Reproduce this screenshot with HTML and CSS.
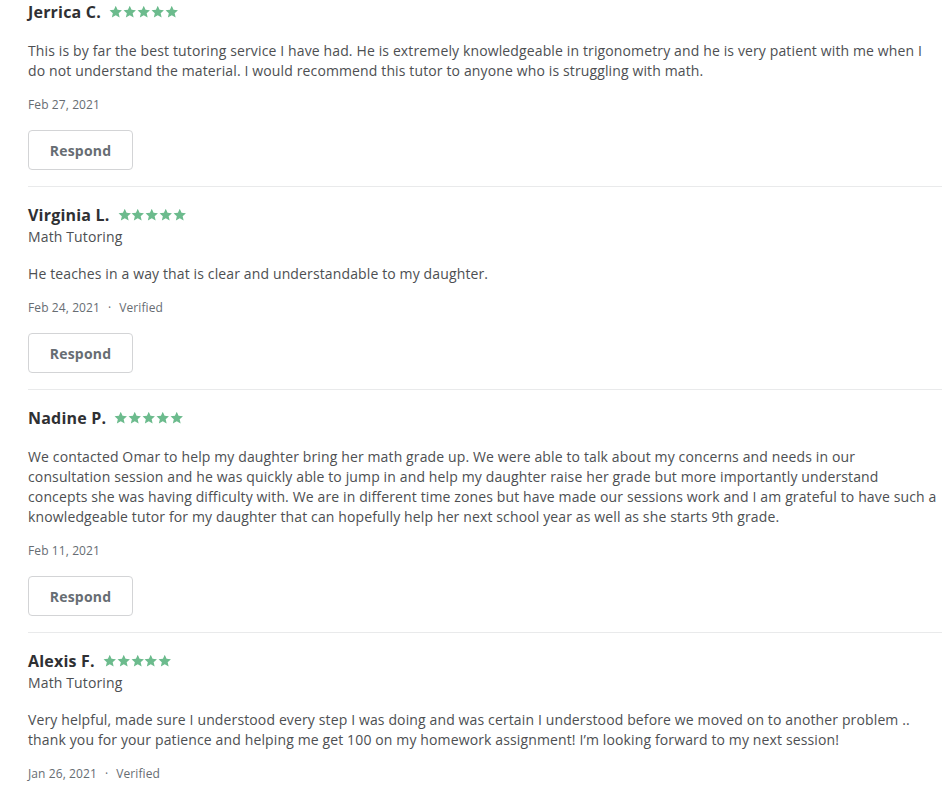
FILE: index.html
```html
<!DOCTYPE html>
<html>
<head>
<meta charset="utf-8">
<link rel="stylesheet" href="styles.css">
</head>
<body>
<svg width="0" height="0" class="defs">
  <defs>
    <symbol id="star" viewBox="0 0 24 24"><path d="M12 1.5l3.2 7.1 7.8.8-5.8 5.2 1.7 7.7L12 18.4l-6.9 3.9 1.7-7.7L1 9.4l7.8-.8z"/></symbol>
  </defs>
</svg>
<div class="reviews">
  <div class="review first">
    <div class="head"><span class="name">Jerrica C.</span><span class="stars"><svg><use href="#star"/></svg><svg><use href="#star"/></svg><svg><use href="#star"/></svg><svg><use href="#star"/></svg><svg><use href="#star"/></svg></span></div>
    <p class="text nosub">This is by far the best tutoring service I have had. He is extremely knowledgeable in trigonometry and he is very patient with me when I do not understand the material. I would recommend this tutor to anyone who is struggling with math.</p>
    <div class="meta">Feb 27, 2021</div>
    <button class="respond">Respond</button>
  </div>
  <div class="review">
    <div class="head"><span class="name">Virginia L.</span><span class="stars"><svg><use href="#star"/></svg><svg><use href="#star"/></svg><svg><use href="#star"/></svg><svg><use href="#star"/></svg><svg><use href="#star"/></svg></span></div>
    <div class="sub">Math Tutoring</div>
    <p class="text">He teaches in a way that is clear and understandable to my daughter.</p>
    <div class="meta">Feb 24, 2021<span class="dot">·</span>Verified</div>
    <button class="respond">Respond</button>
  </div>
  <div class="review">
    <div class="head"><span class="name">Nadine P.</span><span class="stars"><svg><use href="#star"/></svg><svg><use href="#star"/></svg><svg><use href="#star"/></svg><svg><use href="#star"/></svg><svg><use href="#star"/></svg></span></div>
    <p class="text nosub">We contacted Omar to help my daughter bring her math grade up. We were able to talk about my concerns and needs in our consultation session and he was quickly able to jump in and help my daughter raise her grade but more importantly understand concepts she was having difficulty with. We are in different time zones but have made our sessions work and I am grateful to have such a knowledgeable tutor for my daughter that can hopefully help her next school year as well as she starts 9th grade.</p>
    <div class="meta">Feb 11, 2021</div>
    <button class="respond">Respond</button>
  </div>
  <div class="review last">
    <div class="head"><span class="name">Alexis F.</span><span class="stars"><svg><use href="#star"/></svg><svg><use href="#star"/></svg><svg><use href="#star"/></svg><svg><use href="#star"/></svg><svg><use href="#star"/></svg></span></div>
    <div class="sub">Math Tutoring</div>
    <p class="text">Very helpful, made sure I understood every step I was doing and was certain I understood before we moved on to another problem .. thank you for your patience and helping me get 100 on my homework assignment! I’m looking forward to my next session!</p>
    <div class="meta">Jan 26, 2021<span class="dot">·</span>Verified</div>
  </div>
</div>
</body>
</html>
```
FILE: styles.css
```css
html, body {
  margin: 0;
  padding: 0;
  background: #fff;
}
body {
  font-family: "Open Sans", "Noto Sans", sans-serif;
  color: #2f3033;
}
.defs {
  position: absolute;
}
.reviews {
  padding: 0 7px 0 28px;
}
.review {
  border-bottom: 1px solid #e9eaeb;
  padding: 18px 0 16px;
}
.review.first {
  padding-top: 2px;
}
.review.last {
  border-bottom: none;
}
.head {
  display: flex;
  align-items: center;
  height: 20px;
}
.name {
  font-size: 16px;
  font-weight: 700;
  letter-spacing: 0.2px;
  color: #2f3033;
}
.stars {
  margin-left: 8px;
  display: flex;
  gap: 0.4px;
  fill: #6cbb8d;
}
.stars svg {
  width: 13.5px;
  height: 13.5px;
}
.sub {
  font-size: 14px;
  letter-spacing: 0.13px;
  color: #4d4f52;
  line-height: 20px;
  margin-top: 2px;
}
.text {
  margin: 17px 0 0;
  font-size: 14px;
  letter-spacing: 0.13px;
  line-height: 20px;
  color: #4d4f52;
  padding-right: 4px;
}
.text.nosub {
  margin-top: 19px;
}
.meta {
  margin-top: 14px;
  font-size: 12px;
  letter-spacing: 0.1px;
  line-height: 20px;
  color: #676d73;
}
.dot {
  margin: 0 8px;
}
.respond {
  display: block;
  margin-top: 15px;
  width: 105px;
  height: 40px;
  border: 1.5px solid #d3d4d6;
  border-radius: 4px;
  background: #fff;
  font-family: inherit;
  font-size: 14px;
  font-weight: 700;
  letter-spacing: 0.2px;
  color: #676d73;
  padding: 0;
}
```
